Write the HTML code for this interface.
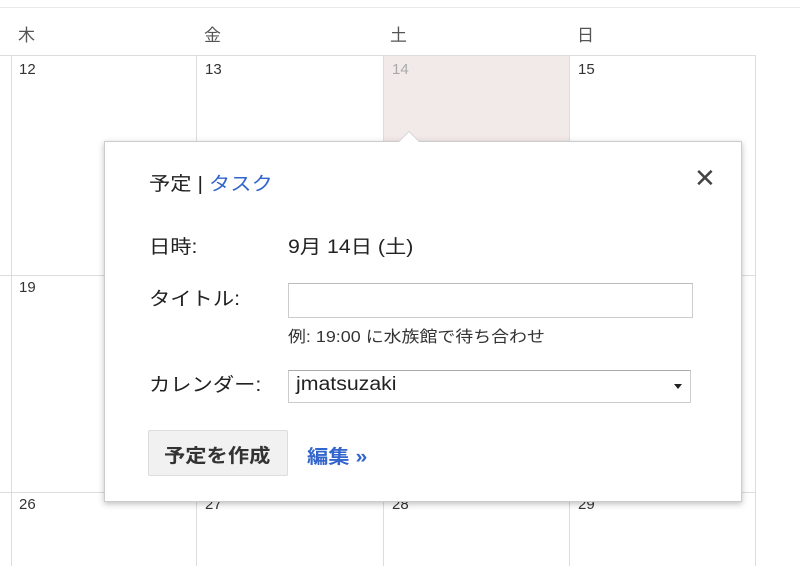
<!DOCTYPE html>
<html><head><meta charset="utf-8"><style>
body{margin:0;width:800px;height:566px;overflow:hidden;background:#fff;font-family:"Liberation Sans","Noto Sans CJK JP",sans-serif;position:relative}
.a{position:absolute;white-space:nowrap}
.s{transform:scaleX(1.12);transform-origin:0 0}
.vl{position:absolute;width:1px;background:#ddd}
.hl{position:absolute;height:1px;background:#ddd}
.dn{position:absolute;font-size:15px;color:#333}
.dh{position:absolute;top:21px;font-size:17px;color:#555}
</style></head><body>
<div class="hl" style="left:0;top:7px;width:800px;background:#e8e8e8"></div>
<div class="dh" style="left:18px">木</div>
<div class="dh" style="left:204px">金</div>
<div class="dh" style="left:390px">土</div>
<div class="dh" style="left:577px">日</div>
<div class="a" style="left:383px;top:55px;width:187px;height:220px;background:#f2e9e9;border:1px solid #999;box-sizing:border-box"></div>
<div class="hl" style="left:0;top:55px;width:756px"></div>
<div class="hl" style="left:0;top:275px;width:756px"></div>
<div class="hl" style="left:0;top:492px;width:756px"></div>
<div class="vl" style="left:11px;top:55px;height:511px"></div>
<div class="vl" style="left:196px;top:55px;height:511px"></div>
<div class="vl" style="left:383px;top:55px;height:511px"></div>
<div class="vl" style="left:569px;top:55px;height:511px"></div>
<div class="vl" style="left:755px;top:55px;height:511px"></div>
<div class="dn" style="left:19px;top:61px">12</div>
<div class="dn" style="left:205px;top:61px">13</div>
<div class="dn" style="left:392px;top:61px;color:#aaa">14</div>
<div class="dn" style="left:578px;top:61px">15</div>
<div class="dn" style="left:19px;top:279px">19</div>
<div class="dn" style="left:19px;top:496px">26</div>
<div class="dn" style="left:205px;top:496px">27</div>
<div class="dn" style="left:392px;top:496px">28</div>
<div class="dn" style="left:578px;top:496px">29</div>
<div class="a" style="left:104px;top:141px;width:638px;height:361px;background:#fff;border:1px solid #ccc;box-sizing:border-box;box-shadow:0 2px 6px rgba(0,0,0,.25)"></div>
<div class="a" style="left:398px;top:131px;width:0;height:0;border-left:11px solid transparent;border-right:11px solid transparent;border-bottom:11px solid #ccc"></div>
<div class="a" style="left:399px;top:132px;width:0;height:0;border-left:10px solid transparent;border-right:10px solid transparent;border-bottom:10px solid #fff"></div>
<div class="a s" style="left:149px;top:169px;font-size:19px;color:#222">予定 | <span style="color:#3366cc">タスク</span></div>
<div class="a" style="left:694px;top:163px;font-size:26px;color:#444">✕</div>
<div class="a s" style="left:149px;top:232px;font-size:19px;color:#222">日時:</div>
<div class="a s" style="left:288px;top:232px;font-size:19px;color:#222">9月 14日 (土)</div>
<div class="a s" style="left:149px;top:284px;font-size:19px;color:#222">タイトル:</div>
<div class="a" style="left:288px;top:283px;width:405px;height:35px;border:1px solid #ccc;box-sizing:border-box;border-top-color:#bbb"></div>
<div class="a s" style="left:288px;top:323px;font-size:16px;color:#333">例: 19:00 に水族館で待ち合わせ</div>
<div class="a s" style="left:149px;top:370px;font-size:19px;color:#222">カレンダー:</div>
<div class="a" style="left:288px;top:370px;width:403px;height:33px;border:1px solid #ccc;border-top-color:#aaa;box-sizing:border-box"></div>
<div class="a s" style="left:296px;top:374px;font-size:19px;color:#222">jmatsuzaki</div>
<div class="a" style="left:674px;top:384px;width:0;height:0;border-left:4px solid transparent;border-right:4px solid transparent;border-top:5px solid #222"></div>
<div class="a" style="left:148px;top:430px;width:140px;height:46px;background:#f1f1f1;border:1px solid #ddd;box-sizing:border-box;border-radius:2px"></div>
<div class="a s" style="left:164px;top:441px;font-size:19px;font-weight:bold;color:#333">予定を作成</div>
<div class="a s" style="left:307px;top:442px;font-size:19px;font-weight:bold;color:#3366cc">編集 »</div>
</body></html>
